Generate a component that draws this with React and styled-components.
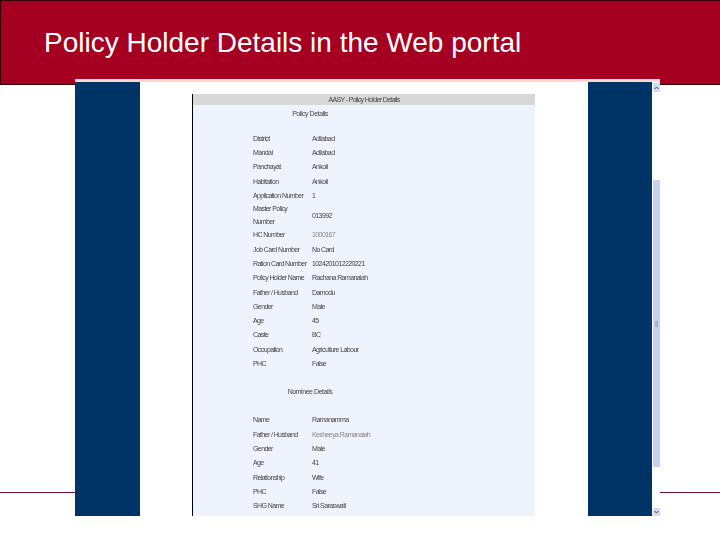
import styled, { createGlobalStyle } from "styled-components";

const GlobalStyle = createGlobalStyle`
  html, body {
    margin: 0;
    padding: 0;
    background: #fff;
  }
`;

const Slide = styled.div`
  position: relative;
  width: 720px;
  height: 540px;
  overflow: hidden;
  background: #fff;
  font-family: "Liberation Sans", Arial, sans-serif;
`;

const TitleBar = styled.header`
  box-sizing: border-box;
  height: 85px;
  padding: 27px 0 0 43px;
  background: #a50021;
  border: 1px solid #3a0008;
  border-right: 0;
`;

const Title = styled.h1`
  margin: 0;
  color: #fff;
  font-size: 28px;
  font-weight: 400;
  line-height: 30px;
  white-space: nowrap;
`;

const FooterRule = styled.div`
  height: 1px;
  margin-top: 407px;
  background: #7a1030;
`;

const Capture = styled.section`
  position: absolute;
  top: 79px;
  left: 75px;
  display: flex;
  box-sizing: border-box;
  width: 585px;
  height: 437px;
  background: #fff;
  border-top: 3px solid #fddcd2;
`;

const NavyBand = styled.div`
  flex: none;
  width: ${(p) => p.$width}px;
  background: #003366;
`;

const Gutter = styled.div`
  flex: none;
  width: ${(p) => p.$width}px;
`;

const Form = styled.div`
  flex: none;
  box-sizing: border-box;
  width: 343px;
  margin-top: 12px;
  overflow: hidden;
  color: #444;
  font-size: 7px;
  letter-spacing: -0.6px;
  background: #eef3fd;
  border-left: 1px solid #000;
`;

const FormHeader = styled.div`
  height: 11px;
  letter-spacing: -0.65px;
  line-height: 11px;
  text-align: center;
  color: #444;
  background: #d8d8d8;
  filter: blur(0.3px);
`;

const SectionTitle = styled.div`
  box-sizing: border-box;
  width: 174px;
  padding-left: 60px;
  margin: ${(p) => p.$top}px 0 ${(p) => p.$bottom}px;
  letter-spacing: -0.45px;
  line-height: 14px;
  text-align: center;
  color: #444;
  white-space: nowrap;
  filter: blur(0.3px);
`;

const Row = styled.div`
  display: flex;
  align-items: center;
  min-height: 14.3px;
  padding-left: 60px;
  line-height: 12.5px;
  filter: blur(0.3px);
`;

const Label = styled.div`
  flex: none;
  width: 59px;
  white-space: pre;
`;

const Value = styled.div`
  white-space: nowrap;
  color: ${(p) => (p.$faint ? "#888" : "#444")};
`;

const Scrollbar = styled.div`
  display: flex;
  flex: none;
  flex-direction: column;
  width: 7px;
  margin-left: 1px;
`;

const ScrollButton = styled.div`
  display: flex;
  flex: none;
  align-items: center;
  justify-content: center;
  height: ${(p) => p.$height}px;
  margin-top: ${(p) => p.$top || 0}px;
  background: #cfdcf2;
`;

const ScrollThumb = styled.div`
  display: flex;
  flex: none;
  align-items: center;
  justify-content: center;
  height: 287px;
  margin-top: 88px;
  background: #c3d3f0;
`;

const Grip = styled.div`
  width: 3px;
  height: 6px;
  background: #9fb2d8;
`;

const policyRows = [
  ["District", "Adilabad"],
  ["Mandal", "Adilabad"],
  ["Panchayat", "Ankoli"],
  ["Habitation", "Ankoli"],
  ["Application Number", "1"],
  ["Master Policy\nNumber", "013992"],
  ["HC Number", "1000167", true],
  ["Job Card Number", "No Card"],
  ["Ration Card Number", "1024201012220221"],
  ["Policy Holder Name", "Rachana Ramanaiah"],
  ["Father / Husband", "Damodu"],
  ["Gender", "Male"],
  ["Age", "45"],
  ["Caste", "BC"],
  ["Occupation", "Agriculture Labour"],
  ["PHC", "False"],
];

const nomineeRows = [
  ["Name", "Ramanamma"],
  ["Father / Husband", "Kesheeya Ramanaiah", true],
  ["Gender", "Male"],
  ["Age", "41"],
  ["Relationship", "Wife"],
  ["PHC", "False"],
  ["SHG Name", "Sri Saraswati"],
];

function DetailRows({ rows }) {
  return rows.map(([label, value, faint]) => (
    <Row key={label}>
      <Label>{label}</Label>
      <Value $faint={faint}>{value}</Value>
    </Row>
  ));
}

function Arrow({ up }) {
  return (
    <svg width="5" height="4" viewBox="0 0 5 4">
      <path
        d={up ? "M0.5 3 L2.5 1 L4.5 3" : "M0.5 1 L2.5 3 L4.5 1"}
        fill="none"
        stroke="#445"
        strokeWidth="1"
      />
    </svg>
  );
}

export default function App() {
  return (
    <Slide>
      <GlobalStyle />
      <TitleBar>
        <Title>Policy Holder Details in the Web portal</Title>
      </TitleBar>
      <FooterRule />
      <Capture>
        <NavyBand $width={65} />
        <Gutter $width={52} />
        <Form>
          <FormHeader>AASY - Policy Holder Details</FormHeader>
          <SectionTitle $top={2} $bottom={11}>Policy Details</SectionTitle>
          <DetailRows rows={policyRows} />
          <SectionTitle $top={14} $bottom={14}>Nominee Details</SectionTitle>
          <DetailRows rows={nomineeRows} />
        </Form>
        <Gutter $width={53} />
        <NavyBand $width={64} />
        <Scrollbar>
          <ScrollButton $height={9} $top={1}>
            <Arrow up />
          </ScrollButton>
          <ScrollThumb>
            <Grip />
          </ScrollThumb>
          <ScrollButton $height={8} $top={41}>
            <Arrow />
          </ScrollButton>
        </Scrollbar>
      </Capture>
    </Slide>
  );
}
